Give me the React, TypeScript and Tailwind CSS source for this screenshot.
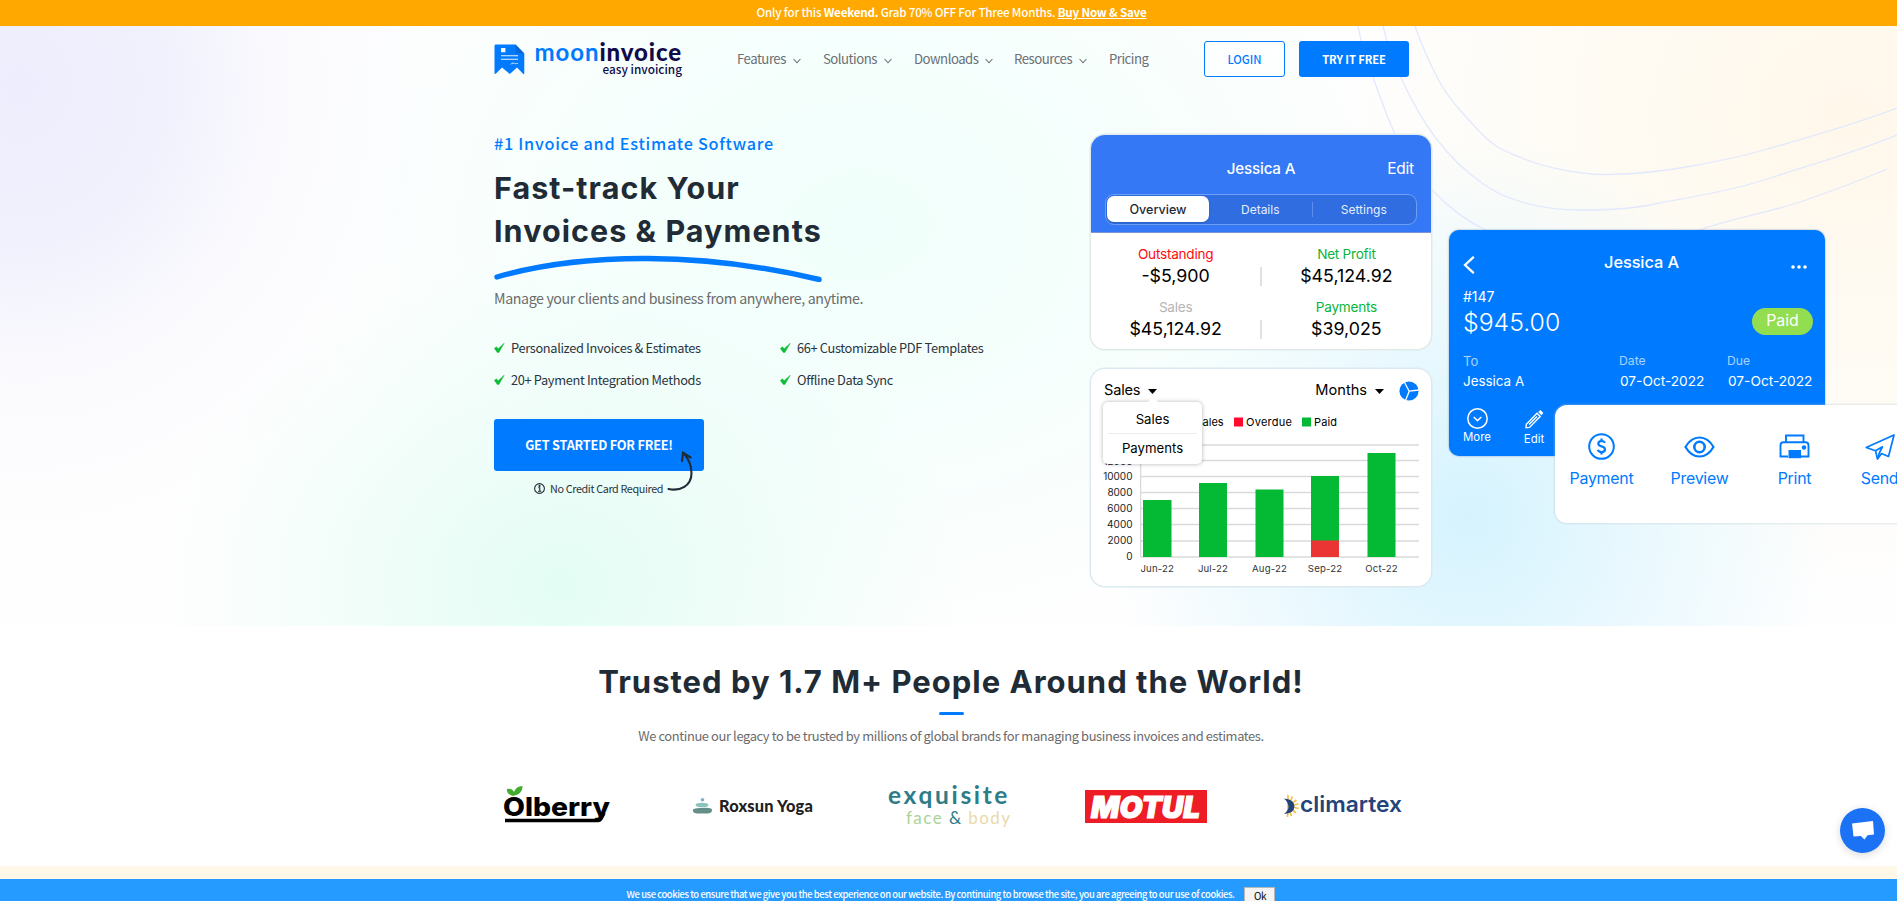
import React from "react";

const swash = "M3 22 C 90 -3, 210 -3, 325 24.500";

function Chevron() {
  return (
    <svg className="mt-[3px] h-[6px] w-[8px]" viewBox="0 0 8 6" fill="none" stroke="#6b6f76" strokeWidth="1.1">
      <path d="M0.6 1 L4 4.8 L7.4 1" />
    </svg>
  );
}

function Logo() {
  return (
    <a className="flex h-[36px] w-[189px] items-start">
      <svg className="mt-[3px] h-[31px] w-[31px] shrink-0" viewBox="0 0 31 31">
        <path d="M2 0.6H21.5L30.3 9.5V29Q30.3 31 28.8 29.5L23 23.5L15.8 30L8 23.5L2 29.6Q0.5 30.8 0.5 29V2Q0.5 0.6 2 0.6Z" fill="#007bff" />
        <path d="M21.5 0.6L30.3 9.5H23Q21.5 9.5 21.5 8Z" fill="#0568d6" />
        <rect x="7" y="4" width="4.4" height="4.2" fill="#fff" />
        <path d="M7 11.8H24M7 15.2H24" stroke="#e8f3ff" strokeWidth="1.1" />
        <path d="M16.5 20.4l2-1.6.4 1.2 1.5-1.1.6.9 3-.4" stroke="#cfe5ff" strokeWidth=".8" fill="none" />
      </svg>
      <div className="ml-[10px] flex w-[147px] flex-col items-end">
        <div className="h-[23px] whitespace-nowrap font-['Lato',sans-serif] text-[24px] leading-[22px] tracking-[0.9px] text-[#100a4a]">
          <span className="font-bold text-[#007bff]">moon</span>
          <span className="font-black">invoice</span>
        </div>
        <div className="h-[14px] whitespace-nowrap text-[11.8px] font-medium leading-[10px] text-[#100a4a]">easy invoicing</div>
      </div>
    </a>
  );
}

function NavItem({ label, w, arrow = true }: { label: string; w: string; arrow?: boolean }) {
  return (
    <a className={`flex items-center gap-[7px] whitespace-nowrap text-[13.2px] leading-[20px] tracking-[-0.5px] text-[#6b6f76] ${w}`}>
      {label}
      {arrow && <Chevron />}
    </a>
  );
}

function Tick({ children, w }: { children: React.ReactNode; w: string }) {
  return (
    <div className={`flex h-[32px] items-center gap-[6px] whitespace-nowrap text-[12.8px] leading-[20px] tracking-[-0.34px] text-[#2b3440] ${w}`}>
      <svg className="h-[10px] w-[11px]" viewBox="0 0 11 10">
        <path d="M0.4 5.4L2.4 3.8L4.2 5.8L10.2 0.2L4.8 9.6H3.4Z" fill="#0cbc35" stroke="#0cbc35" strokeWidth=".5" />
      </svg>
      {children}
    </div>
  );
}

function Stat({ label, value, color }: { label: string; value: string; color: string }) {
  return (
    <div className="flex w-[170px] flex-col items-center whitespace-nowrap">
      <span className={`text-[13.6px] leading-[19px] tracking-[-0.25px] ${color}`}>{label}</span>
      <span className="text-[17.8px] leading-[23px] tracking-[0px] text-black">{value}</span>
    </div>
  );
}

function ProfileCard() {
  return (
    <section className="h-[214px] w-[340px] overflow-hidden rounded-[14px] bg-white ring-[1.5px] ring-[#dfeae9]">
      <header className="h-[98px] border-b border-[#7c97cf] bg-[#3478f6] px-[14px] pt-[23px] text-white">
        <div className="grid grid-cols-3 items-center text-[15.2px] leading-[22px] tracking-[-0.2px]">
          <span />
          <span className="text-center font-medium">Jessica A</span>
          <span className="pr-[3px] text-right text-[15.5px]">Edit</span>
        </div>
        <div className="mt-[14px] flex h-[31px] items-center rounded-[9px] border border-[#6f9ff5] bg-[#2f6de0] p-[1px] text-[12px] text-[#e6eefc]">
          <span className="flex h-[26px] w-[102px] items-center justify-center rounded-[7px] bg-white pt-[2px] text-[12.6px] font-medium text-[#1f2937] shadow">Overview</span>
          <span className="flex-1 pt-px text-center">Details</span>
          <span className="h-[15px] w-px bg-[#5d8eee]" />
          <span className="flex-1 pt-px text-center">Settings</span>
        </div>
      </header>
      <div className="flex flex-col gap-[10px] pt-[12px]">
        <div className="flex h-[43px] items-start">
          <Stat label="Outstanding" value="-$5,900" color="text-[#ff0a0a]" />
          <span className="mt-[22px] h-[19px] w-[1.5px] bg-[#e0e0e0]" />
          <Stat label="Net Profit" value="$45,124.92" color="text-[#08b53a]" />
        </div>
        <div className="flex h-[43px] items-start">
          <Stat label="Sales" value="$45,124.92" color="text-[#b5b5b5]" />
          <span className="mt-[22px] h-[19px] w-[1.5px] bg-[#e0e0e0]" />
          <Stat label="Payments" value="$39,025" color="text-[#08b53a]" />
        </div>
      </div>
    </section>
  );
}

const bars = [
  { x: 52, w: 28.5, top: 131, label: "Jun-22" },
  { x: 108, w: 28, top: 114, label: "Jul-22" },
  { x: 164.5, w: 28, top: 120.5, label: "Aug-22" },
  { x: 220, w: 28, top: 107, label: "Sep-22" },
  { x: 276.5, w: 28, top: 84, label: "Oct-22" },
];
const grid = [76, 91.5, 107.5, 123.5, 139.5, 155.5, 172, 188];
const ticks = ["", "12000", "10000", "8000", "6000", "4000", "2000", "0"];

function Caret() {
  return (
    <svg className="h-[5px] w-[9px]" viewBox="0 0 9 5">
      <path d="M0 0H9L4.5 5Z" fill="#000" />
    </svg>
  );
}

function ChartCard() {
  return (
    <section className="relative h-[217px] w-[340px] rounded-[14px] bg-white ring-[1.5px] ring-[#dceaf0]">
      <div className="flex h-[44px] items-center pl-[13px] pr-[12px] text-[14.6px] text-black">
        <span className="mr-[8px] tracking-[-0.2px]">Sales</span>
        <Caret />
        <span className="ml-auto mr-[8px]">Months</span>
        <Caret />
        <svg className="ml-[15px] h-[20px] w-[20px]" viewBox="0 0 20 20">
          <circle cx="10" cy="10" r="9.6" fill="#007bff" />
          <path d="M10.2 10.2L5 0.5M10.2 10.2L20 9M10.2 10.2L6.5 19.6" stroke="#fff" strokeWidth="1.3" />
        </svg>
      </div>
      <svg className="absolute left-0 top-0 h-[217px] w-[340px] font-['Inter',sans-serif]" viewBox="0 0 340 217">
        <text x="104.500" y="57" fontSize="11">Sales</text>
        <rect x="143" y="48.5" width="9" height="9" fill="#ff0a2d" />
        <text x="155" y="57" fontSize="11" textLength="46">Overdue</text>
        <rect x="211" y="48.5" width="9" height="9" fill="#04b934" />
        <text x="223" y="57" fontSize="11" textLength="23">Paid</text>
        {grid.map((y, i) => (
          <g key={y}>
            <line x1="50" x2="328" y1={y} y2={y} stroke="#dadada" strokeWidth="1.3" />
            <text x="41.5" y={y + (i === 1 ? 4.5 : 3)} fontSize="10" textAnchor="end" fill="#222">{ticks[i]}</text>
          </g>
        ))}
        <line x1="49.7" x2="49.7" y1="76" y2="188" stroke="#cfcfcf" />
        {bars.map((b) => (
          <g key={b.label}>
            <rect x={b.x} y={b.top} width={b.w} height={188 - b.top} fill="#04b934" />
            <text x={b.x + b.w / 2} y="203" fontSize="9.6" textAnchor="middle" fill="#333" letterSpacing=".15">{b.label}</text>
          </g>
        ))}
        <rect x="220" y="171.5" width="28" height="16.5" fill="#eb3434" />
      </svg>
      <div className="absolute left-[12px] top-[33px] flex h-[62px] w-[99px] flex-col rounded-[5px] bg-white text-center text-[13.2px] text-black shadow-[0_0_4px_rgba(0,0,0,0.3)]">
        <svg className="absolute left-[44px] top-[-5px] h-[6px] w-[12px]" viewBox="0 0 12 6">
          <path d="M0 6L6 0L12 6Z" fill="#fff" />
        </svg>
        <span className="h-[31px] leading-[34px]">Sales</span>
        <span className="mx-[5px] h-px bg-[#ececec]" />
        <span className="leading-[29px]">Payments</span>
      </div>
    </section>
  );
}

function InvoiceCard() {
  return (
    <section className="h-[226px] w-[376px] rounded-[10px] bg-[#007bff] px-[15px] pt-[21px] text-white shadow-[0_0_2px_rgba(0,60,130,0.5)]">
      <div className="flex h-[26px] items-start justify-between">
        <svg className="-ml-px mt-[5px] h-[18px] w-[12px]" viewBox="0 0 12 18" fill="none" stroke="#fff" strokeWidth="2.3">
          <path d="M10.8 0.8L2 9L10.8 17.2" />
        </svg>
        <span className="ml-[17px] text-[16.400px] font-medium leading-[23px] tracking-[-0.1px]">Jessica A</span>
        <svg className="mr-[3px] mt-[14px] h-[4px] w-[16px]" viewBox="0 0 16 4" fill="#fff">
          <circle cx="2" cy="2" r="1.8" />
          <circle cx="8" cy="2" r="1.8" />
          <circle cx="14" cy="2" r="1.8" />
        </svg>
      </div>
      <div className="-ml-px mt-[10px] text-[14px] leading-[20px]">#147</div>
      <div className="flex h-[31px] items-start justify-between">
        <span className="-ml-px text-[24.800px] font-light leading-[31px]">$945.00</span>
        <span className="-mr-[3px] mt-px flex h-[27px] w-[61px] items-center justify-center rounded-full bg-[#93dd50] text-[15.8px]">Paid</span>
      </div>
      <div className="mt-[13px] grid grid-cols-[156px_108px_auto] whitespace-nowrap text-[12.2px] leading-[20px]">
        <span className="-ml-px text-[13px] text-[#a9d3ff]">To</span>
        <span className="-ml-px text-[#a9d3ff]">Date</span>
        <span className="-ml-px text-[#a9d3ff]">Due</span>
        <span className="-ml-px text-[13.4px]">Jessica A</span>
        <span className="text-[13.7px]">07-Oct-2022</span>
        <span className="text-[13.7px]">07-Oct-2022</span>
      </div>
      <div className="-ml-px mt-[17px] flex gap-[32px] text-[11.4px] leading-[14px]">
        <div className="flex w-[28px] flex-col items-center">
          <svg className="h-[21px] w-[21px]" viewBox="0 0 21 21" fill="none" stroke="#fff" strokeWidth="1.5">
            <circle cx="10.5" cy="10.5" r="9.7" />
            <path d="M6.7 9L10.5 12.6L14.3 9" />
          </svg>
          <span className="mt-px">More</span>
        </div>
        <div className="flex w-[22px] flex-col items-center pt-px">
          <svg className="h-[20px] w-[19px]" viewBox="0 0 19 20" fill="none" stroke="#fff" strokeWidth="1.4">
            <path d="M1 18.8L1.3 15.2L12 4.3L15.2 7.5L4.5 18.4Z" />
            <path d="M4 15.5L12 7.4" />
            <path d="M13.2 3L15.4 1L18.4 4L16.4 6.2Z" fill="#fff" stroke="none" />
          </svg>
          <span className="mt-[3px]">Edit</span>
        </div>
      </div>
    </section>
  );
}

function Action({ label, icon, w }: { label: string; icon: React.ReactNode; w: string }) {
  return (
    <div className={`flex shrink-0 flex-col items-center ${w}`}>
      <div className="flex h-[28px] items-center">{icon}</div>
      <span className="mt-[7px] text-[15.9px] leading-[22px] tracking-[-0.25px]">{label}</span>
    </div>
  );
}

function ActionsCard() {
  return (
    <section className="absolute left-[105.5px] top-[175px] flex h-[118px] w-[400px] rounded-[12px] bg-white pt-[28px] text-[#007bff] shadow-[0_0_0_1.5px_rgba(170,190,200,0.25)]">
      <Action
        w="w-[94px]"
        label="Payment"
        icon={
          <svg className="h-[27px] w-[27px]" viewBox="0 0 27 27" fill="none" stroke="#007bff">
            <circle cx="13.5" cy="13.5" r="12.3" strokeWidth="2" />
            <path d="M17 9.8Q16 8 13.5 8Q10.3 8.2 10.3 10.5Q10.3 12.6 13.5 13.4Q17 14.2 17 16.6Q16.8 19 13.5 19Q10.6 19 9.8 16.9M13.5 5.6V8M13.5 19V21.6" strokeWidth="2.2" />
          </svg>
        }
      />
      <Action
        w="w-[102px]"
        label="Preview"
        icon={
          <svg className="h-[22px] w-[31px]" viewBox="0 0 31 22" fill="none" stroke="#007bff">
            <path d="M1.5 11Q7 1.5 15.5 1.5Q24 1.5 29.5 11Q24 20.5 15.5 20.5Q7 20.5 1.5 11Z" strokeWidth="2.2" />
            <circle cx="15.5" cy="11" r="5.2" strokeWidth="2.6" />
          </svg>
        }
      />
      <Action
        w="w-[88px]"
        label="Print"
        icon={
          <svg className="h-[25px] w-[31px]" viewBox="0 0 31 25" fill="none" stroke="#007bff" strokeWidth="1.9">
            <path d="M7 8V1.5H24.5V8" />
            <path d="M9 22.5H1.5V11.5Q1.5 8.3 4.5 8.3H26.5Q29.5 8.3 29.5 11.5V22.5H22" />
            <rect x="9.5" y="16" width="12.5" height="8.2" fill="#007bff" stroke="none" />
            <circle cx="25" cy="13.5" r="2.2" fill="#007bff" stroke="none" />
          </svg>
        }
      />
      <Action
        w="w-[82px]"
        label="Send"
        icon={
          <svg className="h-[26px] w-[30px]" viewBox="0 0 30 26" fill="none" stroke="#007bff" strokeWidth="1.7" strokeLinejoin="round">
            <path d="M1.2 13.500L29 1L23.5 22.5L16.5 19.500L12.5 25L10.5 16.8Z" />
            <path d="M10.5 16.8L17.5 12.8L14.5 18.5L12.5 24.5" />
          </svg>
        }
      />
    </section>
  );
}

function Backdrop() {
  return (
    <svg className="absolute inset-0 h-[600px] w-[1897px]" viewBox="0 26 1897 600" fill="none" stroke="#e2e9fd" strokeWidth="1.3">
      <path d="M1415 26C1423 49 1429 62 1438.500 80S1463 114 1480 132S1506 151 1522 158S1575 175 1608.500 174.500S1665 171 1692 166S1740 157 1764 150S1850 126 1897 108" />
      <path d="M1383 26C1388 48 1393 61 1400.500 77S1420 117 1435 137S1466 172 1482 183S1506 197 1522 202S1560 210 1583 210S1631 209 1655 204S1728 192 1764 180S1853 153 1897 135" />
      <path d="M1358 26C1362 48 1367 60 1373 77S1387 117 1395 134S1417 174 1431 189S1466 221 1484 229S1530 252 1583 252S1670 240 1702 229S1771 212 1800 202S1859 181 1887 169" />
    </svg>
  );
}

function Hero() {
  return (
    <div className="relative h-[600px] w-[1897px] shrink-0 overflow-hidden bg-[radial-gradient(ellipse_420px_460px_at_20px_60px,#ededfd_0%,rgba(239,239,253,0.85)_35%,rgba(246,246,254,0.4)_65%,rgba(255,255,255,0)_100%),radial-gradient(ellipse_400px_330px_at_560px_560px,#e3fdf4_0%,rgba(232,253,246,0.7)_40%,rgba(246,255,252,0)_100%),radial-gradient(ellipse_560px_420px_at_860px_200px,rgba(240,255,251,1)_0%,rgba(243,255,252,0.8)_45%,rgba(250,255,254,0)_100%),radial-gradient(ellipse_360px_380px_at_1470px_490px,#d5f3fe_0%,rgba(220,245,254,0.7)_40%,rgba(240,250,255,0)_100%),radial-gradient(ellipse_520px_480px_at_1850px_90px,#fff7ea_0%,rgba(255,250,240,0.8)_45%,rgba(255,253,250,0)_100%),linear-gradient(#fefefe,#fefefe)]">
      <Backdrop />
      <div className="relative flex h-full flex-col">
        <nav className="ml-[494px] flex h-[67px] w-[915px] items-start pt-[15px]">
          <Logo />
          <div className="ml-[54px] mt-[8px] flex">
            <NavItem label="Features" w="w-[86px]" />
            <NavItem label="Solutions" w="w-[91px]" />
            <NavItem label="Downloads" w="w-[100px]" />
            <NavItem label="Resources" w="w-[95px]" />
            <NavItem label="Pricing" w="w-[95px]" arrow={false} />
          </div>
          <a className="flex h-[36px] w-[81px] items-center justify-center rounded-[3px] border border-[#007bff] bg-white/60 pt-px text-[11.300px] font-medium text-[#007bff]">LOGIN</a>
          <a className="ml-[14px] flex h-[36px] w-[110px] items-center justify-center whitespace-nowrap rounded-[3px] bg-[#007bff] pt-px text-[11.200px] font-bold tracking-[-0.1px] text-white">TRY IT FREE</a>
        </nav>
        <div className="flex">
          <div className="ml-[494px] w-[597px] pt-[38px]">
            <p className="h-[25px] whitespace-nowrap text-[16.200px] font-medium leading-[25px] tracking-[0.75px] text-[#007bff]">#1 Invoice and Estimate Software</p>
            <h1 className="mt-[10px] whitespace-nowrap font-['Inter',sans-serif] text-[30.5px] font-bold leading-[43px] tracking-[1.050px] text-[#212b36]">
              Fast-track Your
              <br />
              Invoices &amp; Payments
            </h1>
            <svg className="mt-[3px] h-[27px] w-[328px]" viewBox="0 0 328 27" fill="none" stroke="#007bff" strokeWidth="5.4" strokeLinecap="round">
              <path d={swash} />
            </svg>
            <p className="mt-[5px] whitespace-nowrap text-[14.200px] leading-[22px] tracking-[-0.370px] text-[#6b6b6b]">Manage your clients and business from anywhere, anytime.</p>
            <div className="mt-[23px] flex flex-wrap">
              <Tick w="w-[286px]">Personalized Invoices &amp; Estimates</Tick>
              <Tick w="w-[286px]">66+ Customizable PDF Templates</Tick>
              <Tick w="w-[286px]">20+ Payment Integration Methods</Tick>
              <Tick w="w-[286px]">Offline Data Sync</Tick>
            </div>
            <div className="relative mt-[23px] w-[210px]">
              <button className="flex h-[52px] w-[210px] items-center justify-center whitespace-nowrap rounded-[3px] bg-[#007bff] pb-px text-[12.700px] font-bold tracking-[-0.2px] text-white">GET STARTED FOR FREE!</button>
              <div className="mt-[8px] flex items-center gap-[5px] pl-[40px] text-[10.800px] leading-[18px] tracking-[-0.37px] text-[#2b3440]">
                <svg className="h-[11px] w-[11px]" viewBox="0 0 11 11" fill="none" stroke="#212b36" strokeWidth="1.1">
                  <circle cx="5.500" cy="5.500" r="4.9" />
                  <path d="M4.3 4.800H5.800V8M4 8.200H7.300" />
                  <circle cx="5.500" cy="2.900" r=".5" fill="#212b36" />
                </svg>
                <span className="whitespace-nowrap">No Credit Card Required</span>
              </div>
              <svg className="absolute left-[172px] top-[31px] h-[42px] w-[30px]" viewBox="0 0 30 42" fill="none" stroke="#212b36" strokeWidth="2.100" strokeLinecap="round">
                <path d="M2.500 39C14 41.500 25.500 36 25.500 23C25.500 14 21 7 17.500 3" />
                <path d="M16 11L17 2.800L24.700 7.500" />
              </svg>
            </div>
          </div>
          <div className="flex flex-col gap-[20.500px] pt-[41.500px] font-['Inter',sans-serif]">
            <ProfileCard />
            <ChartCard />
          </div>
          <div className="relative ml-[18px] font-['Inter',sans-serif]">
            <div className="h-[136.500px]" />
            <div className="relative">
              <InvoiceCard />
              <ActionsCard />
            </div>
          </div>
        </div>
      </div>
    </div>
  );
}

function Brands() {
  return (
    <div className="ml-[503px] flex h-[48px] w-[900px] items-center">
      <svg className="h-[48px] w-[110px] font-['Inter',sans-serif]" viewBox="0 0 110 48">
        <path d="M10 14Q3 12 4 7Q9 6 11 10Q13 4 19.500 4Q20 12 10 14Z" fill="#42ad2c" />
        <text x="0" y="33.500" fontSize="25.500" fontWeight="800" textLength="107" lengthAdjust="spacingAndGlyphs">Olberry</text>
        <path d="M2 38.500H95Q97 38.500 98 36.500L101 31" stroke="#000" strokeWidth="3.6" fill="none" />
      </svg>
      <svg className="ml-[79px] h-[18px] w-[21px]" viewBox="0 0 21 18">
        <circle cx="10.500" cy="2.800" r="1.800" fill="#7cb4c4" />
        <ellipse cx="10" cy="8" rx="6.500" ry="2.300" fill="#8cc4bc" />
        <path d="M1 12.500Q3 10.500 10 11Q19 10 20 12.500Q20.500 16.500 15 16.500H5Q0 16 1 12.500Z" fill="#648e88" />
      </svg>
      <span className="ml-[6px] w-[95px] whitespace-nowrap font-['Lato',sans-serif] text-[16.400px] font-black tracking-[0.150px] text-[#212121]">Roxsun Yoga</span>
      <div className="ml-[74px] flex w-[124px] flex-col whitespace-nowrap font-['Lato',sans-serif]">
        <span className="text-[24.500px] font-bold leading-[22px] tracking-[2.650px] text-[#2d7c88]">exquisite</span>
        <span className="pl-[18px] text-[17px] leading-[23px] tracking-[1.450px] text-[#a8d494]">
          face <span className="text-[#2d7c88]">&amp;</span> <span className="text-[#ead9a8]">body</span>
        </span>
      </div>
      <svg className="ml-[73px] h-[33px] w-[122px] font-['Inter',sans-serif]" viewBox="0 0 122 33">
        <rect width="122" height="33" fill="#ee1c25" />
        <text x="6" y="27.500" fontSize="30" fontWeight="900" fontStyle="italic" fill="#fff" stroke="#fff" strokeWidth="1.200" textLength="109" lengthAdjust="spacingAndGlyphs">MOTUL</text>
      </svg>
      <svg className="ml-[76px] h-[24px] w-[120px] font-['Inter',sans-serif]" viewBox="0 0 120 24">
        <g stroke="#f4c24a" strokeWidth="1.700">
          <path d="M5 12L5 1M5 12L9.500 2.500M5 12L13.500 6M5 12L15.500 10M5 12L15.500 14.500M5 12L13 19M5 12L8.500 22M5 12L4.500 23" />
        </g>
        <path d="M1 4.500Q11 5 11.500 12.500Q11 19.500 1 20Q5.500 16.500 5.500 12.500Q5 8 1 4.500Z" fill="#23447a" />
        <text x="17" y="17.500" fontSize="22" fontWeight="600" fill="#23447a" textLength="102" lengthAdjust="spacingAndGlyphs">climartex</text>
      </svg>
    </div>
  );
}

export default function App() {
  return (
    <div className="relative flex h-[901px] w-[1897px] flex-col overflow-hidden bg-white font-['Noto_Sans_CJK_SC',sans-serif]">
      <div className="flex h-[26px] shrink-0 items-center justify-center whitespace-nowrap bg-[#ffa800] pb-px pl-[6px] text-[11.600px] font-medium leading-[25px] tracking-[-0.2px] text-white">
        <span>
          Only for this <b className="font-bold">Weekend.</b> Grab 70% OFF For Three Months. <a className="font-bold underline">Buy Now &amp; Save</a>
        </span>
      </div>
      <Hero />
      <main className="flex h-[240px] shrink-0 flex-col items-stretch bg-white pl-[5px]">
        <h2 className="mt-[32px] whitespace-nowrap text-center font-['Inter',sans-serif] text-[31px] font-bold leading-[48px] tracking-[1px] text-[#212b36]">Trusted by 1.7 M+ People Around the World!</h2>
        <span className="mx-auto mt-[6px] h-[3px] w-[25px] rounded-full bg-[#007bff]" />
        <p className="mt-[10px] whitespace-nowrap text-center text-[12.900px] leading-[22px] tracking-[-0.380px] text-[#6b6b6b]">We continue our legacy to be trusted by millions of global brands for managing business invoices and estimates.</p>
        <div className="-ml-[5px] mt-[35px]">
          <Brands />
        </div>
      </main>
      <div className="h-[13px] shrink-0 bg-[#fff8e8]" />
      <div className="flex h-[40px] shrink-0 items-start justify-center gap-[10px] whitespace-nowrap bg-[#259bff] pl-[5px] pt-[8px] text-[9.400px] font-medium leading-[14px] tracking-[-0.400px] text-white">
        <span>We use cookies to ensure that we give you the best experience on our website. By continuing to browse the site, you are agreeing to our use of cookies.</span>
        <button className="h-[17px] w-[31px] border border-[#b8b8b8] bg-[#f4f4f4] text-[9.900px] font-normal leading-[14px] text-black">Ok</button>
      </div>
      <div className="absolute left-[1840px] top-[808px] flex h-[45px] w-[45px] items-center justify-center rounded-full bg-[#1b72f5] shadow-[0_2px_8px_rgba(0,0,0,0.15)]">
        <svg className="h-[19px] w-[22px]" viewBox="0 0 22 19">
          <path d="M0 2.500L21 0L22 13.500L15.500 14.300L12.500 18.500L9 15L1.500 15.500Z" fill="#fff" />
        </svg>
      </div>
    </div>
  );
}
